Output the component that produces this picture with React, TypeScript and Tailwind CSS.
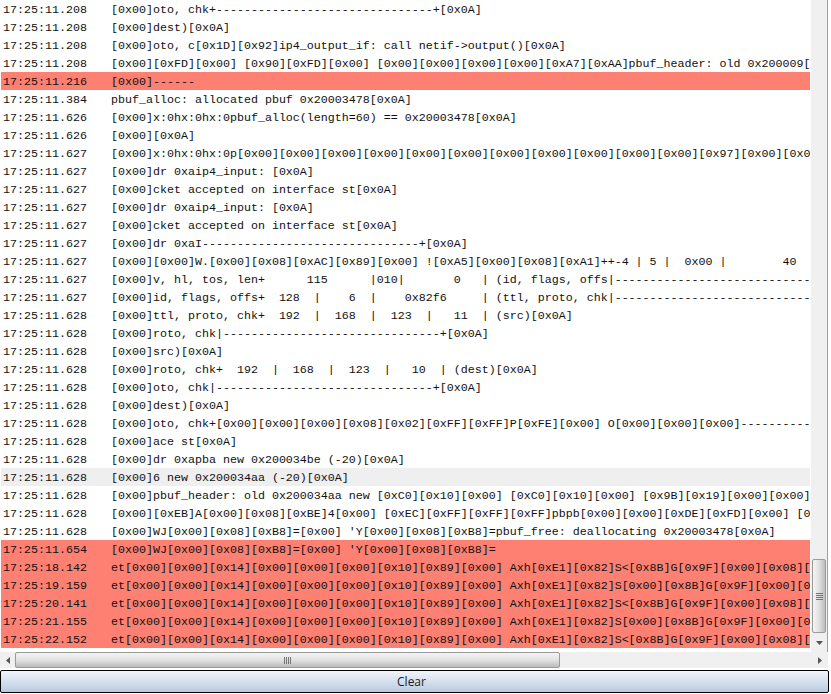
const dashes = '-'.repeat(31);
const longDash = '-'.repeat(60);

type Row = { time: string; msg: string; tone?: 'red' | 'gray' };

const rows: Row[] = [
  { time: '17:25:11.208', msg: `[0x00]oto, chk+${dashes}+[0x0A]` },
  { time: '17:25:11.208', msg: '[0x00]dest)[0x0A]' },
  { time: '17:25:11.208', msg: '[0x00]oto, c[0x1D][0x92]ip4_output_if: call netif->output()[0x0A]' },
  { time: '17:25:11.208', msg: '[0x00][0xFD][0x00] [0x90][0xFD][0x00] [0x00][0x00][0x00][0x00][0xA7][0xAA]pbuf_header: old 0x200009[0x0A]' },
  { time: '17:25:11.216', msg: '[0x00]------', tone: 'red' },
  { time: '17:25:11.384', msg: 'pbuf_alloc: allocated pbuf 0x20003478[0x0A]' },
  { time: '17:25:11.626', msg: '[0x00]x:0hx:0hx:0pbuf_alloc(length=60) == 0x20003478[0x0A]' },
  { time: '17:25:11.626', msg: '[0x00][0x0A]' },
  { time: '17:25:11.627', msg: '[0x00]x:0hx:0hx:0p[0x00][0x00][0x00][0x00][0x00][0x00][0x00][0x00][0x00][0x00][0x00][0x97][0x00][0x00]' },
  { time: '17:25:11.627', msg: '[0x00]dr 0xaip4_input: [0x0A]' },
  { time: '17:25:11.627', msg: '[0x00]cket accepted on interface st[0x0A]' },
  { time: '17:25:11.627', msg: '[0x00]dr 0xaip4_input: [0x0A]' },
  { time: '17:25:11.627', msg: '[0x00]cket accepted on interface st[0x0A]' },
  { time: '17:25:11.627', msg: `[0x00]dr 0xaI${dashes}+[0x0A]` },
  { time: '17:25:11.627', msg: '[0x00][0x00]W.[0x00][0x08][0xAC][0x89][0x00] ![0xA5][0x00][0x08][0xA1]++-4 | 5 |  0x00 |        40' },
  { time: '17:25:11.627', msg: `[0x00]v, hl, tos, len+      115      |010|       0   | (id, flags, offs|${longDash}` },
  { time: '17:25:11.627', msg: `[0x00]id, flags, offs+  128  |    6  |    0x82f6     | (ttl, proto, chk|${longDash}` },
  { time: '17:25:11.628', msg: '[0x00]ttl, proto, chk+  192  |  168  |  123  |   11  | (src)[0x0A]' },
  { time: '17:25:11.628', msg: `[0x00]roto, chk|${dashes}+[0x0A]` },
  { time: '17:25:11.628', msg: '[0x00]src)[0x0A]' },
  { time: '17:25:11.628', msg: '[0x00]roto, chk+  192  |  168  |  123  |   10  | (dest)[0x0A]' },
  { time: '17:25:11.628', msg: `[0x00]oto, chk|${dashes}+[0x0A]` },
  { time: '17:25:11.628', msg: '[0x00]dest)[0x0A]' },
  { time: '17:25:11.628', msg: `[0x00]oto, chk+[0x00][0x00][0x00][0x08][0x02][0xFF][0xFF]P[0xFE][0x00] O[0x00][0x00][0x00]${longDash}` },
  { time: '17:25:11.628', msg: '[0x00]ace st[0x0A]' },
  { time: '17:25:11.628', msg: '[0x00]dr 0xapba new 0x200034be (-20)[0x0A]' },
  { time: '17:25:11.628', msg: '[0x00]6 new 0x200034aa (-20)[0x0A]', tone: 'gray' },
  { time: '17:25:11.628', msg: '[0x00]pbuf_header: old 0x200034aa new [0xC0][0x10][0x00] [0xC0][0x10][0x00] [0x9B][0x19][0x00][0x00]' },
  { time: '17:25:11.628', msg: '[0x00][0xEB]A[0x00][0x08][0xBE]4[0x00] [0xEC][0xFF][0xFF][0xFF]pbpb[0x00][0x00][0xDE][0xFD][0x00] [0x00]' },
  { time: '17:25:11.628', msg: "[0x00]WJ[0x00][0x08][0xB8]=[0x00] 'Y[0x00][0x08][0xB8]=pbuf_free: deallocating 0x20003478[0x0A]" },
  { time: '17:25:11.654', msg: "[0x00]WJ[0x00][0x08][0xB8]=[0x00] 'Y[0x00][0x08][0xB8]=", tone: 'red' },
  { time: '17:25:18.142', msg: 'et[0x00][0x00][0x14][0x00][0x00][0x00][0x10][0x89][0x00] Axh[0xE1][0x82]S<[0x8B]G[0x9F][0x00][0x08][0x00]', tone: 'red' },
  { time: '17:25:19.159', msg: 'et[0x00][0x00][0x14][0x00][0x00][0x00][0x10][0x89][0x00] Axh[0xE1][0x82]S[0x00][0x8B]G[0x9F][0x00][0x08][0x00]', tone: 'red' },
  { time: '17:25:20.141', msg: 'et[0x00][0x00][0x14][0x00][0x00][0x00][0x10][0x89][0x00] Axh[0xE1][0x82]S<[0x8B]G[0x9F][0x00][0x08][0x00]', tone: 'red' },
  { time: '17:25:21.155', msg: 'et[0x00][0x00][0x14][0x00][0x00][0x00][0x10][0x89][0x00] Axh[0xE1][0x82]S[0x00][0x8B]G[0x9F][0x00][0x08][0x00]', tone: 'red' },
  { time: '17:25:22.152', msg: 'et[0x00][0x00][0x14][0x00][0x00][0x00][0x10][0x89][0x00] Axh[0xE1][0x82]S<[0x8B]G[0x9F][0x00][0x08][0x00]', tone: 'red' },
];

function Grip({ vertical }: { vertical?: boolean }) {
  return (
    <div className={vertical ? 'flex flex-col gap-[1px]' : 'flex gap-[1px]'}>
      {[0, 1, 2, 3].map((i) => (
        <div key={i} className={vertical ? 'w-[7px] h-[1px] bg-[#6f7478]' : 'h-[7px] w-[1px] bg-[#6f7478]'} />
      ))}
    </div>
  );
}

export default function App() {
  return (
    <div className="w-[831px] h-[694px] bg-white overflow-hidden flex flex-col font-['Liberation_Mono',monospace] text-[11.67px] text-[#111]">
      {/* log + vertical scrollbar */}
      <div className="flex h-[652px] pr-[3px]">
        <div className="w-[810px] pl-[1px] overflow-hidden">
          {rows.map((row, i) => (
            <div
              key={i}
              className={`flex h-[18px] leading-[20px] pl-[2px] whitespace-pre ${
                row.tone === 'red' ? 'bg-[#fd8072]' : row.tone === 'gray' ? 'bg-[#efefef]' : ''
              }`}
            >
              <span className="w-[108px] shrink-0">{row.time}</span>
              <span>{row.msg}</span>
            </div>
          ))}
        </div>
        <div className="ml-[1px] w-[17px] flex flex-col bg-[#f0f0f0] border-r border-[#a0a0a0]">
          <div className="flex-1" />
          <div className="h-[74px] mx-[1px] rounded-[2px] border border-[#9a9a9a] bg-gradient-to-r from-[#f4f4f4] via-[#e2e2e2] to-[#bcbcbc] flex items-center justify-center">
            <Grip vertical />
          </div>
          <div className="h-[19px] flex items-center justify-center">
            <svg width="7" height="4" viewBox="0 0 7 4">
              <path d="M0 0h7L3.5 4z" fill="#555" />
            </svg>
          </div>
        </div>
      </div>

      {/* horizontal scrollbar */}
      <div className="h-[16px] w-[828px] flex items-stretch bg-[#f0f0f0]">
        <div className="w-[15px] flex items-center justify-center">
          <svg width="4" height="7" viewBox="0 0 4 7">
            <path d="M4 0v7L0 3.5z" fill="#555" />
          </svg>
        </div>
        <div className="w-[545px] rounded-[2px] border border-[#9a9a9a] bg-gradient-to-b from-[#f4f4f4] via-[#e2e2e2] to-[#bcbcbc] flex items-center justify-center">
          <Grip />
        </div>
        <div className="flex-1" />
        <div className="w-[17px] flex items-center justify-center">
          <svg width="4" height="7" viewBox="0 0 4 7">
            <path d="M0 0v7l4-3.5z" fill="#555" />
          </svg>
        </div>
      </div>

      {/* clear button */}
      <div className="pt-[2px] pr-[2px]">
        <button className="w-[829px] h-[23px] pr-[6px] rounded-[2px] border border-black bg-gradient-to-b from-[#f2f5fa] to-[#b9cbe1] font-['Open_Sans',sans-serif] text-[12px] leading-none text-[#1a1a1a]">
          Clear
        </button>
      </div>
    </div>
  );
}
